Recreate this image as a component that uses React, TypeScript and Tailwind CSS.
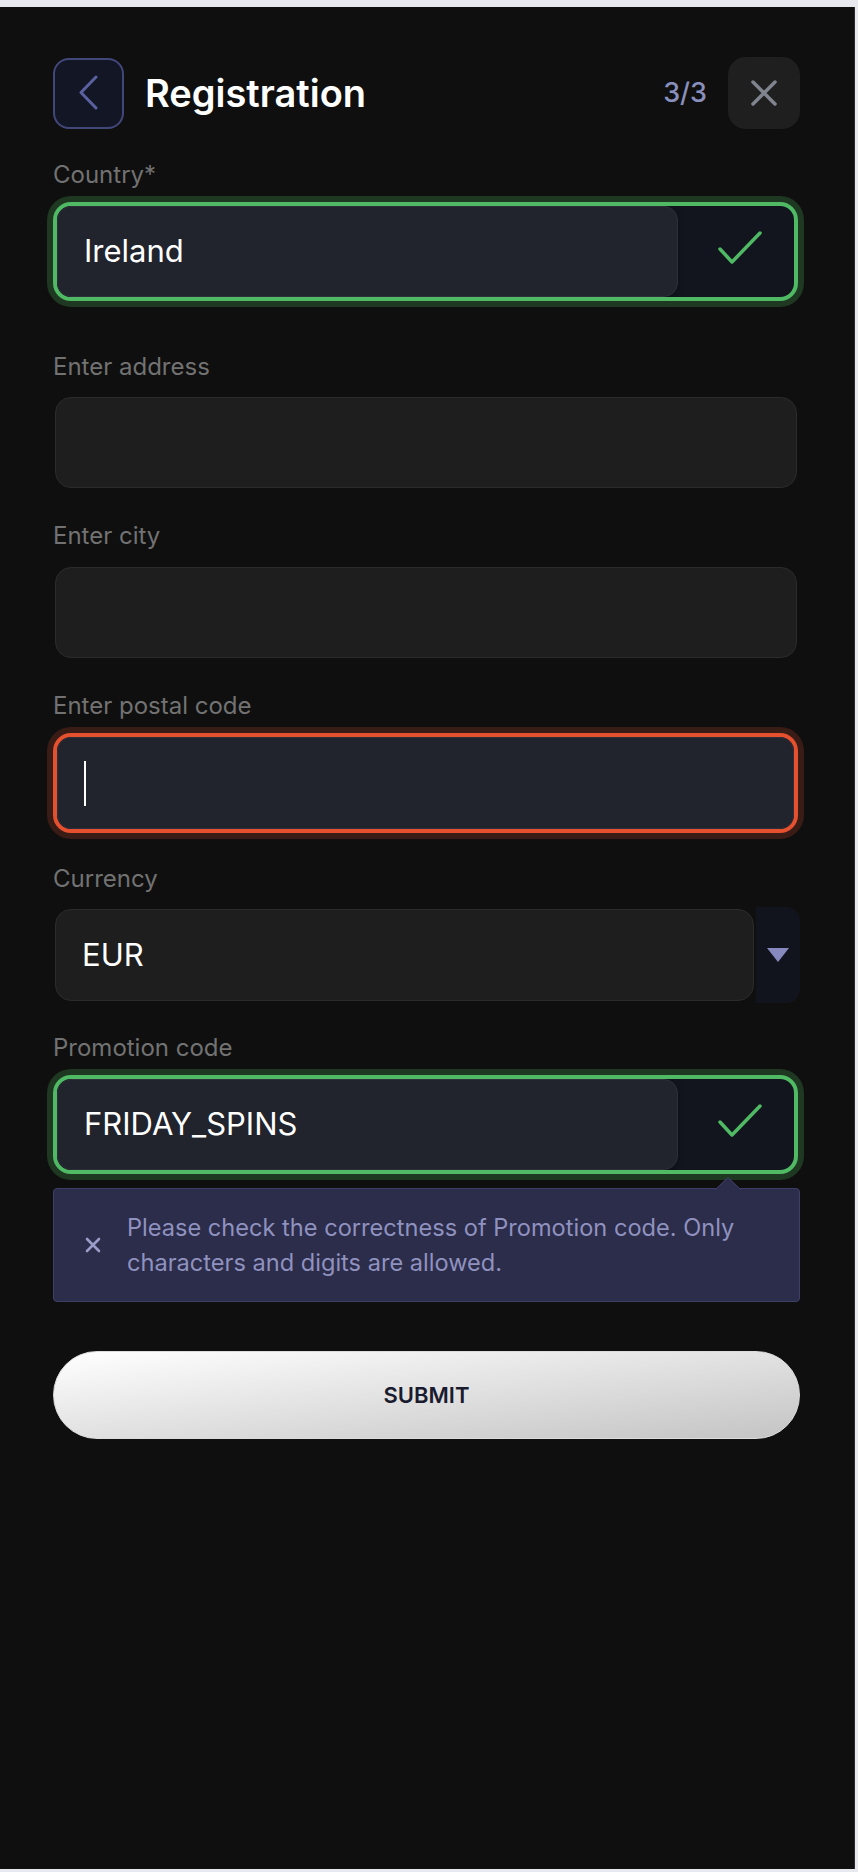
import React from "react";

const font = { fontFamily: "Inter, 'Noto Sans', sans-serif" };

function Check() {
  return (
    <svg width="44" height="33" viewBox="0 0 44 33" fill="none">
      <path d="M2 18 L14 31 L42 2" stroke="#4fb964" strokeWidth="3.5" strokeLinecap="round" strokeLinejoin="round" />
    </svg>
  );
}

function Label({ children, mt }: { children: React.ReactNode; mt: string }) {
  return <div className={`${mt} text-[24px] leading-[29px] text-[#727272]`}>{children}</div>;
}

function ValidField({ value, mt }: { value: string; mt: string }) {
  return (
    <div className={`${mt} w-[745px] h-[99px] rounded-[18px] border-4 border-[#4fb964] bg-[#12151e] shadow-[0_0_0_6px_#1e3822] flex overflow-hidden`}>
      <div className="w-[621px] h-full rounded-[14px] bg-[#21232d] border border-[#2d303b] flex items-center pl-[26px] text-[31px] text-white shadow-[0_2px_6px_rgba(0,0,0,0.35)]">
        {value}
      </div>
      <div className="flex-1 flex items-center justify-center pb-2 pl-[7px]">
        <Check />
      </div>
    </div>
  );
}

export default function App() {
  return (
    <div className="w-[858px] h-[1872px] bg-[#e7e9ef] pt-[7px] pr-[3px] pb-[3px]" style={font}>
      <div className="w-full h-full bg-[#0f0f0f] border-r border-[#2a2a2a] pt-[50px]">
        <div className="ml-[53px] w-[747px] flex flex-col">
          {/* Header */}
          <div className="h-[72px] flex items-center">
            <button className="w-[71px] h-[71px] rounded-[16px] border-2 border-[#42477a] bg-[#131624] flex items-center justify-center">
              <svg width="24" height="36" viewBox="0 0 24 36" fill="none">
                <path d="M19 2 L4 17.5 L19 33" stroke="#5a61a0" strokeWidth="3" strokeLinecap="round" strokeLinejoin="round" />
              </svg>
            </button>
            <div className="ml-[21px] text-[38px] font-semibold text-white leading-none">Registration</div>
            <div className="ml-auto text-[27px] font-medium text-[#8a90bd]">3/3</div>
            <button className="ml-[21px] w-[72px] h-[72px] rounded-[18px] bg-[#1f1f1f] flex items-center justify-center">
              <svg width="28" height="28" viewBox="0 0 28 28" fill="none">
                <path d="M3 3 L25 25 M25 3 L3 25" stroke="#7f848e" strokeWidth="3.5" strokeLinecap="round" />
              </svg>
            </button>
          </div>

          <Label mt="mt-[31px]">Country*</Label>
          <ValidField value="Ireland" mt="mt-[13px]" />

          <Label mt="mt-[51px]">Enter address</Label>
          <div className="mt-[16px] ml-[2px] w-[742px] h-[91px] rounded-[16px] bg-[#1e1e1e] border border-[#2b2b2b]" />

          <Label mt="mt-[33px]">Enter city</Label>
          <div className="mt-[17px] ml-[2px] w-[742px] h-[91px] rounded-[16px] bg-[#1e1e1e] border border-[#2b2b2b]" />

          <Label mt="mt-[33px]">Enter postal code</Label>
          <div className="mt-[13px] w-[745px] h-[100px] rounded-[18px] border-4 border-[#e5502e] bg-[#15171f] shadow-[0_0_0_6px_#3a1c16] overflow-hidden">
            <div className="w-full h-full rounded-[14px] bg-[#21232d] border border-[#2d303b] flex items-center pl-[26px]">
              <div className="w-[2px] h-[45px] bg-white" />
            </div>
          </div>

          <Label mt="mt-[31px]">Currency</Label>
          <div className="mt-[14px] h-[96px] flex items-center">
            <div className="ml-[2px] w-[699px] h-[92px] rounded-[16px] bg-[#1e1e1e] border border-[#2b2b2b] flex items-center pl-[26px] text-[31px] text-white">
              EUR
            </div>
            <div className="ml-[2px] w-[44px] h-[96px] rounded-r-[14px] bg-[#12141d] flex items-center justify-center">
              <svg width="22" height="14" viewBox="0 0 22 14">
                <path d="M0 0 H22 L11 14 Z" fill="#8589bd" />
              </svg>
            </div>
          </div>

          <Label mt="mt-[30px]">Promotion code</Label>
          <ValidField value="FRIDAY_SPINS" mt="mt-[13px]" />

          <div className="relative mt-[14px] w-full rounded-[4px] bg-[#2c2c4b] border border-[#3e3f66] flex items-center pl-[31px] py-[21px]">
            <svg className="absolute -top-[12px] left-[661px]" width="26" height="13" viewBox="0 0 26 13">
              <path d="M0 13 L13 0 L26 13 Z" fill="#2c2c4b" />
              <path d="M0.5 12.5 L13 0.5 L25.5 12.5" stroke="#3e3f66" strokeWidth="1" fill="none" />
            </svg>
            <svg width="16" height="16" viewBox="0 0 16 16" fill="none">
              <path d="M2 2 L14 14 M14 2 L2 14" stroke="#9a9dc8" strokeWidth="2.6" strokeLinecap="round" />
            </svg>
            <div className="ml-[26px] text-[23.6px] leading-[35px] text-[#8f92bf]">
              Please check the correctness of Promotion code. Only
              <br />
              characters and digits are allowed.
            </div>
          </div>

          <button className="mt-[49px] w-full h-[88px] rounded-full border border-[#dcdcdc] bg-gradient-to-br from-[#ffffff] to-[#c4c4c4] text-[22px] font-semibold text-[#1a1b2e]">
            SUBMIT
          </button>
        </div>
      </div>
    </div>
  );
}
